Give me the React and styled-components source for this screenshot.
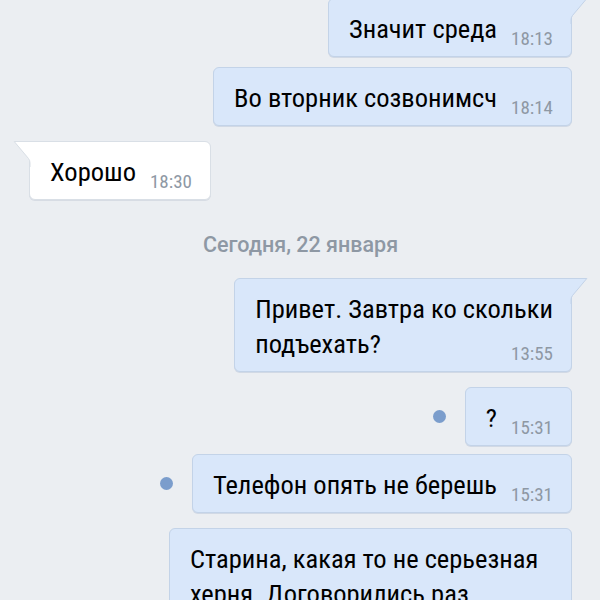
import React from 'react';
import styled, { createGlobalStyle } from 'styled-components';

const GlobalStyle = createGlobalStyle`
  html, body {
    margin: 0;
    padding: 0;
    background: #ebeef2;
    overflow: hidden;
  }
  body {
    font-family: Roboto, 'Noto Sans', sans-serif;
  }
`;

const Chat = styled.div`
  width: 600px;
  height: 600px;
  overflow: hidden;
  display: flex;
  flex-direction: column;
  padding: 0 28px 0 29px;
  box-sizing: border-box;
`;

const Row = styled.div`
  display: flex;
  align-items: center;
  justify-content: ${p => (p.$out ? 'flex-end' : 'flex-start')};
  margin-top: ${p => p.$gap || 0}px;
  flex-shrink: 0;
`;

const Dot = styled.span`
  width: 13px;
  height: 13px;
  border-radius: 50%;
  background: #7b9dcc;
  margin-right: 19px;
  flex-shrink: 0;
`;

const Bubble = styled.div`
  position: relative;
  display: flex;
  flex-direction: ${p => (p.$stacked ? 'column' : 'row')};
  align-items: flex-end;
  box-sizing: border-box;
  width: ${p => (p.$width ? `${p.$width}px` : 'auto')};
  padding: 12px 18px 7px 20px;
  background: ${p => (p.$out ? '#d9e7fa' : '#ffffff')};
  border: 1px solid ${p => (p.$out ? '#c3d3e8' : '#d9dfe6')};
  border-radius: 6px;
  box-shadow: 0 1px 0 ${p => (p.$out ? 'rgba(150,170,200,0.3)' : 'rgba(170,180,195,0.3)')};
  ${p => p.$tail && p.$out && 'border-top-right-radius: 0;'}
  ${p => p.$tail && !p.$out && 'border-top-left-radius: 0;'}
`;

const Text = styled.div`
  font-size: 26.5px;
  line-height: 35px;
  color: #000;
  white-space: nowrap;
  font-stretch: 75%;
  padding-bottom: ${p => (p.$stacked ? 0 : 3)}px;
  align-self: flex-start;
`;

const Time = styled.span`
  font-size: 19px;
  line-height: 20px;
  color: #8e98a4;
  font-stretch: 75%;
  margin-left: ${p => (p.$stacked ? 0 : 14)}px;
  margin-top: ${p => (p.$stacked ? -17 : 0)}px;
  flex-shrink: 0;
`;

const TailSvg = styled.svg`
  position: absolute;
  top: -1px;
  ${p => (p.$out ? 'left: calc(100% - 1px);' : 'right: calc(100% - 1px);')}
  ${p => !p.$out && 'transform: scaleX(-1);'}
  overflow: visible;
`;

const DateLabel = styled.div`
  text-align: center;
  font-size: 21.5px;
  font-weight: 500;
  line-height: 24px;
  color: #8e98a4;
  margin: 33px 0 21px;
  flex-shrink: 0;
`;

const Tail = ({ out }) => (
  <TailSvg $out={out} width="18" height="26" viewBox="0 0 18 26">
    <path d="M0 0 H17 L2.5 17.5 Q1 19.5 1 22 V26 H0 Z" fill={out ? '#d9e7fa' : '#ffffff'} />
    <path
      d="M0 0.5 H16.8 L2.5 17.5 Q1 19.5 1 22 V26"
      fill="none"
      stroke={out ? '#c3d3e8' : '#d9dfe6'}
      strokeWidth="1"
    />
  </TailSvg>
);

const Message = ({ out, tail, dot, gap, width, time, lines }) => {
  const stacked = lines.length > 1;
  return (
    <Row $out={out} $gap={gap}>
      {dot && <Dot />}
      <Bubble $out={out} $tail={tail} $stacked={stacked} $width={width}>
        {tail && <Tail out={out} />}
        <Text $stacked={stacked}>
          {lines.map((l, i) => (
            <React.Fragment key={i}>
              {i > 0 && <br />}
              {l}
            </React.Fragment>
          ))}
        </Text>
        <Time $stacked={stacked}>{time}</Time>
      </Bubble>
    </Row>
  );
};

export default function App() {
  return (
    <>
      <GlobalStyle />
      <Chat>
        <Message out tail gap={-2} time="18:13" lines={['Значит среда']} />
        <Message out gap={10} time="18:14" lines={['Во вторник созвонимсч']} />
        <Message tail gap={15} time="18:30" lines={['Хорошо']} />
        <DateLabel>Сегодня, 22 января</DateLabel>
        <Message out tail time="13:55" lines={['Привет. Завтра ко скольки', 'подъехать?']} />
        <Message out dot gap={15} time="15:31" lines={['?']} />
        <Message out dot gap={8} time="15:31" lines={['Телефон опять не берешь']} />
        <Message
          out
          gap={15}
          width={403}
          time="15:32"
          lines={['Старина, какая то не серьезная', 'херня. Договорились раз', 'созвониться']}
        />
      </Chat>
    </>
  );
}
